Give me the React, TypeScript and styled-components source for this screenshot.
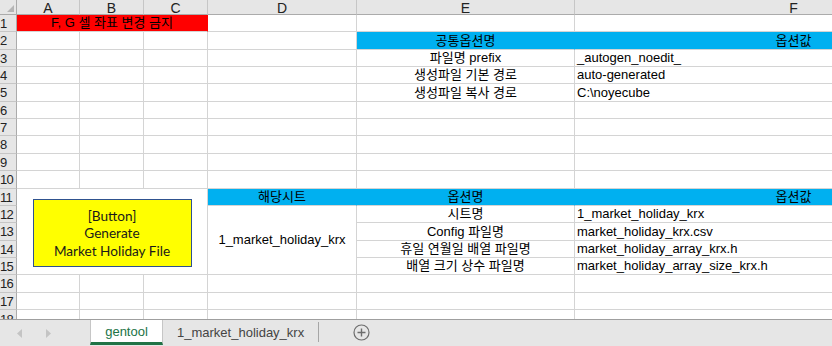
import React from 'react';
import styled, { createGlobalStyle, css } from 'styled-components';

const GlobalStyle = createGlobalStyle`
    html, body {
        margin: 0;
        padding: 0;
        background: #ffffff;
    }
    body {
        font-family: "Liberation Sans", "Noto Sans CJK KR", sans-serif;
    }
`;

// column widths incl. right gridline: row header, A..F
const COLS = [17, 63, 64, 64, 149, 218, 438];
// y of each row's bottom gridline: header, 1..17
const ROW_LINES = [14, 31, 49, 66, 83, 101, 118, 135, 153, 170, 188, 205, 222, 240, 257, 274, 292, 309];
const ROWS = [15, ...ROW_LINES.slice(1).map((y, i) => y - ROW_LINES[i]), 20];
const LETTERS = ['A', 'B', 'C', 'D', 'E', 'F'];

const RED = '#ff0000';
const BLUE = '#00b0f0';
const GRID = '#d4d4d4';

type Align = 'left' | 'center' | 'right';

interface CellDef {
    text?: string;
    fill?: string;
    align?: Align;
    cs?: number;
    rs?: number;
    button?: boolean;
}

// key = "col,row" (col 1 = A)
const CELLS: Record<string, CellDef> = {
    '1,1': { text: 'F, G 셀 좌표 변경 금지', fill: RED, cs: 3 },
    '5,2': { text: '공통옵션명', fill: BLUE },
    '6,2': { text: '옵션값', fill: BLUE },
    '5,3': { text: '파일명 prefix' },
    '6,3': { text: '_autogen_noedit_', align: 'left' },
    '5,4': { text: '생성파일 기본 경로' },
    '6,4': { text: 'auto-generated', align: 'left' },
    '5,5': { text: '생성파일 복사 경로' },
    '6,5': { text: 'C:\\noyecube', align: 'left' },
    '1,11': { cs: 3, rs: 5, button: true },
    '4,11': { text: '해당시트', fill: BLUE },
    '5,11': { text: '옵션명', fill: BLUE },
    '6,11': { text: '옵션값', fill: BLUE },
    '4,12': { text: '1_market_holiday_krx', rs: 4 },
    '5,12': { text: '시트명' },
    '6,12': { text: '1_market_holiday_krx', align: 'left' },
    '5,13': { text: 'Config 파일명' },
    '6,13': { text: 'market_holiday_krx.csv', align: 'left' },
    '5,14': { text: '휴일 연월일 배열 파일명' },
    '6,14': { text: 'market_holiday_array_krx.h', align: 'left' },
    '5,15': { text: '배열 크기 상수 파일명' },
    '6,15': { text: 'market_holiday_array_size_krx.h', align: 'left' },
};

const Window = styled.div`
    width: 832px;
    height: 346px;
    display: flex;
    flex-direction: column;
    overflow: hidden;
    background: #ffffff;
`;

const Sheet = styled.div`
    height: 319px;
    overflow: hidden;
    display: grid;
    grid-template-columns: ${COLS.map((w) => `${w}px`).join(' ')};
    grid-template-rows: ${ROWS.map((h) => `${h}px`).join(' ')};
`;

const Corner = styled.div`
    grid-column: 1;
    grid-row: 1;
    box-sizing: border-box;
    background: #e6e6e6;
    border-right: 1px solid #ababab;
    border-bottom: 1px solid #ababab;
    display: flex;
    align-items: flex-end;
    justify-content: flex-end;
    padding: 0 2px 2px 0;
`;

const ColHead = styled.div<{ $c: number }>`
    grid-column: ${(p) => p.$c + 1};
    grid-row: 1;
    box-sizing: border-box;
    background: #e6e6e6;
    border-right: 1px solid #c6c6c6;
    border-bottom: 1px solid #ababab;
    display: flex;
    align-items: center;
    justify-content: center;
    font-size: 14px;
    line-height: 1;
    color: #222222;
    padding-top: 1px;
`;

const RowHead = styled.div<{ $r: number }>`
    grid-column: 1;
    grid-row: ${(p) => p.$r + 1};
    box-sizing: border-box;
    background: #e6e6e6;
    border-right: 1px solid #ababab;
    border-bottom: 1px solid #c6c6c6;
    display: flex;
    align-items: center;
    justify-content: flex-start;
    overflow: hidden;
    font-size: 13px;
    letter-spacing: -0.8px;
    line-height: 1;
    color: #222222;
    white-space: nowrap;
`;

const Cell = styled.div<{ $c: number; $r: number; $cs: number; $rs: number; $fill?: string; $align: Align }>`
    grid-column: ${(p) => `${p.$c + 1} / span ${p.$cs}`};
    grid-row: ${(p) => `${p.$r + 1} / span ${p.$rs}`};
    box-sizing: border-box;
    min-width: 0;
    overflow: hidden;
    white-space: nowrap;
    display: flex;
    align-items: center;
    padding: 0 2px 1px;
    font-size: 13px;
    line-height: 15px;
    color: #000000;
    border-right: 1px solid ${GRID};
    border-bottom: 1px solid ${GRID};
    justify-content: ${(p) => (p.$align === 'left' ? 'flex-start' : p.$align === 'right' ? 'flex-end' : 'center')};
    ${(p) => p.$fill && css`
        background: ${p.$fill};
        border-right-color: ${p.$fill};
    `}
`;

const ButtonCell = styled(Cell)`
    align-items: center;
    justify-content: center;
    padding: 3px 0 0;
`;

const ShapeButton = styled.div`
    width: 159px;
    height: 68px;
    box-sizing: border-box;
    background: #ffff00;
    border: 1px solid #2f528f;
    display: flex;
    flex-direction: column;
    align-items: center;
    justify-content: center;
    font-family: Lato, "Open Sans", sans-serif;
    font-size: 13.6px;
    line-height: 17.5px;
    color: #1a1a1a;
    padding-top: 2px;
`;

const TabBar = styled.div`
    height: 27px;
    box-sizing: border-box;
    background: #e6e6e6;
    border-top: 1px solid #9f9f9f;
    display: flex;
    align-items: stretch;
    font-size: 13px;
`;

const Nav = styled.div`
    width: 90px;
    display: flex;
    align-items: center;
    gap: 24px;
    padding-left: 17px;
    box-sizing: border-box;
`;

const ActiveTab = styled.div`
    width: 73px;
    height: 25px;
    box-sizing: border-box;
    background: #ffffff;
    border-left: 1px solid #c6c6c6;
    border-right: 1px solid #c6c6c6;
    border-bottom: 3px solid #217346;
    color: #217346;
    display: flex;
    align-items: center;
    justify-content: center;
    padding-top: 1px;
`;

const Tab = styled.div`
    display: flex;
    align-items: center;
    padding: 0 14px 2px;
    color: #444444;
`;

const Divider = styled.div`
    width: 1px;
    height: 20px;
    align-self: center;
    margin-top: -2px;
    background: #a6a6a6;
`;

const AddSheet = styled.div`
    display: flex;
    align-items: center;
    margin-left: 34px;
    padding-bottom: 2px;
`;

function Arrow({ dir }: { dir: 'left' | 'right' }) {
    return (
        <svg width="5" height="9" viewBox="0 0 5 9">
            <path d={dir === 'left' ? 'M5 0 L0 4.5 L5 9 Z' : 'M0 0 L5 4.5 L0 9 Z'} fill="#c4c4c4" />
        </svg>
    );
}

export default function App() {
    const covered = new Set<string>();
    Object.entries(CELLS).forEach(([key, def]) => {
        const [c, r] = key.split(',').map(Number);
        for (let dc = 0; dc < (def.cs ?? 1); dc++) {
            for (let dr = 0; dr < (def.rs ?? 1); dr++) {
                if (dc || dr) covered.add(`${c + dc},${r + dr}`);
            }
        }
    });

    const body: React.ReactNode[] = [];
    for (let r = 1; r <= 18; r++) {
        body.push(<RowHead key={`h${r}`} $r={r}>{r}</RowHead>);
        for (let c = 1; c <= 6; c++) {
            const key = `${c},${r}`;
            if (covered.has(key)) continue;
            const def = CELLS[key] ?? {};
            if (def.button) {
                body.push(
                    <ButtonCell key={key} $c={c} $r={r} $cs={def.cs ?? 1} $rs={def.rs ?? 1} $align="center">
                        <ShapeButton>
                            <span>[Button]</span>
                            <span>Generate</span>
                            <span>Market Holiday File</span>
                        </ShapeButton>
                    </ButtonCell>
                );
                continue;
            }
            body.push(
                <Cell key={key} $c={c} $r={r} $cs={def.cs ?? 1} $rs={def.rs ?? 1} $fill={def.fill} $align={def.align ?? 'center'}>
                    {def.text}
                </Cell>
            );
        }
    }

    return (
        <Window>
            <GlobalStyle />
            <Sheet>
                <Corner>
                    <svg width="7" height="7" viewBox="0 0 7 7">
                        <path d="M7 0 L7 7 L0 7 Z" fill="#b5b5b5" />
                    </svg>
                </Corner>
                {LETTERS.map((l, i) => (
                    <ColHead key={l} $c={i + 1}>{l}</ColHead>
                ))}
                {body}
            </Sheet>
            <TabBar>
                <Nav>
                    <Arrow dir="left" />
                    <Arrow dir="right" />
                </Nav>
                <ActiveTab>gentool</ActiveTab>
                <Tab>1_market_holiday_krx</Tab>
                <Divider />
                <AddSheet>
                    <svg width="17" height="17" viewBox="0 0 17 17">
                        <circle cx="8.5" cy="8.5" r="7.5" fill="none" stroke="#6d6d6d" strokeWidth="1.2" />
                        <path d="M8.5 4.5 V12.5 M4.5 8.5 H12.5" stroke="#6d6d6d" strokeWidth="1.4" />
                    </svg>
                </AddSheet>
            </TabBar>
        </Window>
    );
}
